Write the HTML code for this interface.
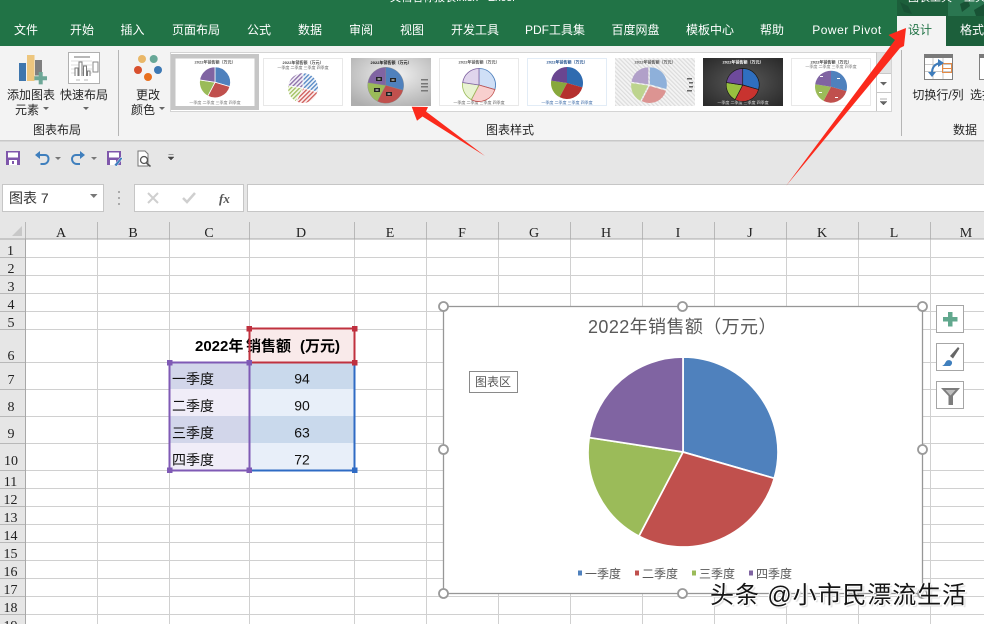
<!DOCTYPE html>
<html><head><meta charset="utf-8">
<style>
html,body{margin:0;padding:0;width:984px;height:624px;overflow:hidden;background:#fff}
svg{position:absolute;left:0;top:0;display:block}
text{font-family:"Liberation Sans","Noto Sans CJK SC",sans-serif}
.t{fill:#fff;font-size:12px;text-anchor:middle}
.r{fill:#262626;font-size:12px;text-anchor:middle}
.h{font-family:"Liberation Serif","Noto Sans CJK SC",serif;font-size:14px;fill:#222;text-anchor:middle}
.c{font-size:14px;fill:#111}
.b{font-size:15px;fill:#000;font-weight:bold}
.n{font-size:14px;fill:#111;text-anchor:middle}
.l{font-size:12px;fill:#595959}
.tt{font-size:4px;font-weight:bold;text-anchor:middle}
#wm{position:absolute;left:710px;top:578px;font:24px/36px "Liberation Sans","Noto Sans CJK SC",sans-serif;letter-spacing:.9px;color:#151515;white-space:pre;text-shadow:1px 1px 0 #fff,-1px 0 0 #fff,2px 2px 1px #ddd}
</style></head><body>
<svg width="984" height="624" viewBox="0 0 984 624" xmlns="http://www.w3.org/2000/svg">
<defs>
<path id="a" d="M0 0V-1A1 1 0 0 1 .961 .277Z"/>
<path id="b" d="M0 0L.961 .277A1 1 0 0 1 -.464 .886Z"/>
<path id="c" d="M0 0L-.464 .886A1 1 0 0 1 -.988 -.152Z"/>
<path id="d" d="M0 0L-.988 -.152A1 1 0 0 1 0 -1Z"/>
<pattern id="h1" width=".2" height=".2" patternUnits="userSpaceOnUse" patternTransform="rotate(45)"><rect width=".2" height=".2" fill="#eef3fa"/><rect width=".09" height=".2" fill="#5b8cc6"/></pattern>
<pattern id="h2" width=".2" height=".2" patternUnits="userSpaceOnUse" patternTransform="rotate(45)"><rect width=".2" height=".2" fill="#fbeeee"/><rect width=".09" height=".2" fill="#d0605c"/></pattern>
<pattern id="h3" width=".2" height=".2" patternUnits="userSpaceOnUse" patternTransform="rotate(45)"><rect width=".2" height=".2" fill="#f4f8ea"/><rect width=".09" height=".2" fill="#a5c264"/></pattern>
<pattern id="h4" width=".2" height=".2" patternUnits="userSpaceOnUse" patternTransform="rotate(45)"><rect width=".2" height=".2" fill="#f3eff7"/><rect width=".09" height=".2" fill="#8f74ab"/></pattern>
<pattern id="hb" width="3" height="3" patternUnits="userSpaceOnUse" patternTransform="rotate(-45)"><rect width="3" height="3" fill="#f4f4f4"/><rect width="1.2" height="3" fill="#dcdcdc"/></pattern>
<radialGradient id="g3" cx="55%" cy="35%" r="75%"><stop offset="0" stop-color="#f2f2f2"/><stop offset="1" stop-color="#aeaeae"/></radialGradient>
<radialGradient id="g7" cx="50%" cy="50%" r="65%"><stop offset="0" stop-color="#5a5a5a"/><stop offset="1" stop-color="#2c2c2c"/></radialGradient>
</defs>

<!-- title bar -->
<rect width="984" height="46" fill="#217346"/>
<rect x="897" width="87" height="16" fill="#1c5f3b"/>
<rect x="946" y="16" width="38" height="30" fill="#1c5f3b"/>
<rect x="948" y="0" width="36" height="16" fill="#2a7650"/>
<path d="M900 2l8 4 4 8-8-2zM960 4l8-4 2 6-8 6zM974 10l10-6v12h-8z" fill="#185235"/>
<text x="390" y="1" fill="#fff" font-size="11">文档名称报表.xlsx - Excel</text>
<text x="908" y="1" fill="#fff" font-size="11">图表工具</text>
<text x="964" y="1" fill="#fff" font-size="11">工具</text>

<!-- ribbon tabs -->
<g class="tabs">
<text class="t" x="26" y="34">文件</text>
<text class="t" x="82" y="34">开始</text>
<text class="t" x="132.500" y="34">插入</text>
<text class="t" x="196" y="34">页面布局</text>
<text class="t" x="259" y="34">公式</text>
<text class="t" x="310" y="34">数据</text>
<text class="t" x="361" y="34">审阅</text>
<text class="t" x="412" y="34">视图</text>
<text class="t" x="475" y="34">开发工具</text>
<text class="t" x="555" y="34">PDF工具集</text>
<text class="t" x="635.500" y="34">百度网盘</text>
<text class="t" x="710" y="34">模板中心</text>
<text class="t" x="772" y="34">帮助</text>
<text class="t" x="847" y="34" style="letter-spacing:.5px">Power Pivot</text>
</g>
<rect x="897" y="16" width="49" height="30" fill="#f3f3f3"/>
<text class="t" x="920" y="34" style="fill:#217346">设计</text>
<text class="t" x="972" y="34">格式</text>

<!-- ribbon -->
<rect y="46" width="984" height="94" fill="#f3f3f3"/>
<rect y="140" width="984" height="1.500" fill="#c8c8c8"/>
<rect y="141.500" width="984" height="80.500" fill="#e6e6e6"/>
<rect x="118" y="50" width="1" height="86" fill="#b5b5b5"/>
<rect x="901" y="50" width="1" height="86" fill="#b5b5b5"/>

<!-- add chart element icon -->
<rect x="19" y="63" width="7" height="18" fill="#3f76ad"/>
<rect x="27" y="55" width="7.500" height="26" fill="#edc67e"/>
<rect x="35" y="60" width="7" height="15.500" fill="#7f7f7f"/>
<path d="M38.700 72h4v4.200H47v4h-4.300v4.200h-4v-4.200h-4.300v-4h4.300z" fill="#6da797"/>
<!-- quick layout icon -->
<rect x="68.500" y="52.500" width="31" height="31" fill="#fff" stroke="#b0b0b0"/>
<rect x="74" y="56" width="16" height="2" fill="#b8b8b8"/>
<path d="M71 61h21M71 65h21M71 69h21M71 73h21" stroke="#dcdcdc"/>
<path d="M75 76V68h3v8M79 76V62h3v14M83.500 76V66h3v10M87.500 76V71h2.500v5" fill="#fff" stroke="#7a7a7a"/>
<rect x="93" y="62" width="5" height="10" fill="#fff" stroke="#8a8a8a"/>
<path d="M76 80h4M84 80h4" stroke="#b8b8b8"/>
<!-- colours icon -->
<circle cx="142" cy="59" r="4" fill="#e9b768"/>
<circle cx="153.700" cy="59" r="4" fill="#67a797"/>
<circle cx="138" cy="70" r="4" fill="#d8502e"/>
<circle cx="158" cy="70" r="4" fill="#3c78b4"/>
<circle cx="148" cy="77" r="4" fill="#e8701f"/>

<text class="r" x="31" y="99">添加图表</text>
<text class="r" x="27" y="114">元素</text>
<path d="M43 107h6l-3 3z" fill="#666"/>
<text class="r" x="84" y="99">快速布局</text>
<path d="M83 107h6l-3 3z" fill="#666"/>
<text class="r" x="148" y="99">更改</text>
<text class="r" x="143" y="114">颜色</text>
<path d="M159 107h6l-3 3z" fill="#666"/>
<text class="r" x="57" y="134">图表布局</text>
<text class="r" x="510" y="134">图表样式</text>
<text class="r" x="938" y="99">切换行/列</text>
<text x="970" y="99" font-size="12" fill="#262626">选择</text>
<text class="r" x="965" y="134">数据</text>

<!-- gallery -->
<rect x="170.500" y="52.500" width="721" height="59" fill="#fff" stroke="#d4d4d4"/>
<rect x="171" y="54" width="88" height="56" fill="#c6c6c6"/>
<rect x="876" y="53" width="15" height="20" fill="#e2e2e2"/>
<path d="M876.500 52v59M876 73.500h15M876 92.500h15" stroke="#c8c8c8"/>
<path d="M880 82h7l-3.500 3.500z" fill="#666"/>
<path d="M880 99h7M880 101.500h7l-3.500 3.500z" fill="#666" stroke="#666" stroke-width=".5"/>

<!-- thumb 1 -->
<rect x="175.500" y="58.500" width="79" height="47.500" fill="#fff"/>
<text class="tt" x="215" y="63.500" fill="#555">2022年销售额（万元）</text>
<text class="tt" x="215" y="104" fill="#777" style="font-weight:normal">一季度 二季度 三季度 四季度</text>
<g transform="translate(215,82.300) scale(15.500)" stroke="#fff" stroke-width=".05"><use href="#a" fill="#4f81bd"/><use href="#b" fill="#c0504d"/><use href="#c" fill="#9bbb59"/><use href="#d" fill="#8064a2"/></g>
<!-- thumb 2 -->
<rect x="263.500" y="58.500" width="79" height="47" fill="#fff" stroke="#e8e8e8"/>
<text class="tt" x="303" y="64" fill="#444">2022年销售额（万元）</text>
<text class="tt" x="303" y="69" fill="#666" style="font-weight:normal">一季度 二季度 三季度 四季度</text>
<g transform="translate(303,88) scale(15.300)" stroke="#fff" stroke-width=".05"><use href="#a" fill="url(#h1)"/><use href="#b" fill="url(#h2)"/><use href="#c" fill="url(#h3)"/><use href="#d" fill="url(#h4)"/></g>
<!-- thumb 3 -->
<rect x="351" y="58" width="80" height="48" fill="url(#g3)"/>
<text class="tt" x="391" y="64" fill="#111">2022年销售额（万元）</text>
<g transform="translate(385.700,85.300) scale(18)" stroke="#888" stroke-width=".02"><use href="#a" fill="#4f81bd"/><use href="#b" fill="#c0504d"/><use href="#c" fill="#9bbb59"/><use href="#d" fill="#8064a2"/></g>
<g fill="#222"><rect x="390" y="78" width="6" height="4"/><rect x="376" y="77" width="6" height="4"/><rect x="374" y="88" width="6" height="4"/><rect x="386" y="92" width="6" height="4"/></g>
<g fill="#fff"><rect x="391.500" y="79.500" width="3" height="1"/><rect x="377.500" y="78.500" width="3" height="1"/><rect x="375.500" y="89.500" width="3" height="1"/><rect x="387.500" y="93.500" width="3" height="1"/></g>
<g fill="#777"><rect x="421" y="79" width="7" height="1.500"/><rect x="421" y="83" width="7" height="1.500"/><rect x="421" y="86" width="7" height="1.500"/><rect x="421" y="90" width="7" height="1.500"/></g>
<!-- thumb 4 -->
<rect x="439.500" y="58.500" width="79" height="47" fill="#fff" stroke="#e8e8e8"/>
<text class="tt" x="479" y="63.500" fill="#555">2022年销售额（万元）</text>
<text class="tt" x="479" y="104" fill="#666" style="font-weight:normal">一季度 二季度 三季度 四季度</text>
<g transform="translate(479,85) scale(16.500)" stroke-width=".05"><use href="#a" fill="#cfdff6" stroke="#4f81bd"/><use href="#b" fill="#f8cfce" stroke="#c0504d"/><use href="#c" fill="#e9f3d2" stroke="#9bbb59"/><use href="#d" fill="#e0d5ec" stroke="#8064a2"/></g>
<!-- thumb 5 -->
<rect x="527.500" y="58.500" width="79" height="47" fill="#fff" stroke="#e2ecf6"/>
<text class="tt" x="567" y="63.500" fill="#1f4e8c">2022年销售额（万元）</text>
<text class="tt" x="567" y="104" fill="#3a6aa8" style="font-weight:normal">一季度 二季度 三季度 四季度</text>
<g transform="translate(567,83) scale(16)"><use href="#a" fill="#2f6bb0"/><use href="#b" fill="#b5302e"/><use href="#c" fill="#88a83c"/><use href="#d" fill="#6a4690"/></g>
<!-- thumb 6 -->
<rect x="615" y="58" width="80" height="48" fill="url(#hb)"/>
<text class="tt" x="655" y="63.500" fill="#555">2022年销售额（万元）</text>
<g transform="translate(649,85) scale(17)"><use href="#a" fill="#8eb0da" transform="translate(.05,-.04)"/><use href="#b" fill="#dc9492" transform="translate(.04,.06)"/><use href="#c" fill="#bdd48e" transform="translate(-.05,.04)"/><use href="#d" fill="#b1a0c9" transform="translate(-.04,-.04)"/></g>
<g fill="#666"><rect x="687" y="78" width="5" height="1.500"/><rect x="689" y="82" width="4" height="1.500"/><rect x="689" y="86" width="4" height="1.500"/><rect x="687" y="90" width="5" height="1.500"/></g>
<!-- thumb 7 -->
<rect x="703" y="58" width="80" height="48" fill="url(#g7)"/>
<text class="tt" x="743" y="63.500" fill="#fff">2022年销售额（万元）</text>
<text class="tt" x="743" y="104" fill="#ddd" style="font-weight:normal">一季度 二季度 三季度 四季度</text>
<g transform="translate(742.700,85) scale(16.500)" stroke="#1a1a1a" stroke-width=".04"><use href="#a" fill="#2f6fc0"/><use href="#b" fill="#c8332f"/><use href="#c" fill="#98c03f"/><use href="#d" fill="#6e4a9c"/></g>
<!-- thumb 8 -->
<rect x="791.500" y="58.500" width="79" height="47" fill="#fff" stroke="#e8e8e8"/>
<text class="tt" x="831" y="63.500" fill="#444">2022年销售额（万元）</text>
<text class="tt" x="831" y="68" fill="#777" style="font-weight:normal">一季度 二季度 三季度 四季度</text>
<g transform="translate(831,86.700) scale(16)"><use href="#a" fill="#4f81bd"/><use href="#b" fill="#c0504d"/><use href="#c" fill="#9bbb59"/><use href="#d" fill="#8064a2"/></g>
<g fill="#fff"><rect x="837" y="78" width="3" height="1"/><rect x="835" y="97" width="3" height="1"/><rect x="819" y="92" width="3" height="1"/><rect x="820" y="76" width="3" height="1"/></g>

<!-- switch row/col icon -->
<rect x="924.500" y="54.500" width="28" height="25" fill="#fff" stroke="#808080"/>
<rect x="924" y="54" width="29" height="4" fill="#7a7a7a"/>
<path d="M925 64.500h27M925 71.500h27M933 58v21M943 58v21" stroke="#c8c8c8"/>
<rect x="942.500" y="63.500" width="9" height="9" fill="none" stroke="#e58a45"/>
<path d="M942.500 68.500h9" stroke="#e58a45"/>
<path d="M932 73c0-6 3-9 8-10" fill="none" stroke="#3e7cbb" stroke-width="2"/>
<path d="M938 59l6 4-6 4zM928 72h8l-4 5z" fill="#3e7cbb"/>
<!-- next icon -->
<rect x="979.500" y="54.500" width="8" height="25" fill="#fff" stroke="#808080"/>
<rect x="979" y="54" width="6" height="4" fill="#7a7a7a"/>

<!-- QAT -->
<path d="M6 151h14v14H6z" fill="#7f57ab"/>
<rect x="8" y="152.500" width="10" height="5" fill="#fff"/>
<rect x="9" y="160" width="8" height="5" fill="#fff"/>
<rect x="12" y="161" width="2" height="3" fill="#7f57ab"/>
<path d="M38 155h7c3 0 3.500 2.500 3.500 4s-1 5-5 5h-3" fill="none" stroke="#3f7fbd" stroke-width="2"/>
<path d="M35 155l5-4v8z" fill="#3f7fbd"/>
<path d="M55 157h6l-3 3z" fill="#777"/>
<path d="M82 155h-6c-3 0-4 2.500-4 4s1 5 5 5h3" fill="none" stroke="#3f7fbd" stroke-width="2"/>
<path d="M85 155l-5-4v8z" fill="#3f7fbd"/>
<path d="M91 157h6l-3 3z" fill="#777"/>
<path d="M107 151h14v14h-14z" fill="#7f57ab"/>
<rect x="109" y="152.500" width="10" height="5" fill="#fff"/>
<rect x="110" y="160" width="6" height="5" fill="#fff"/>
<path d="M114 165l7-8 1.500 1.500-6 8z" fill="#3f7fbd" stroke="#fff" stroke-width=".5"/>
<path d="M138 151h7l3 3v12h-10z" fill="#fff" stroke="#777"/>
<circle cx="144" cy="160" r="3.500" fill="#fff" stroke="#555" stroke-width="1.300"/>
<path d="M146.500 163l4 3.500" stroke="#555" stroke-width="1.500"/>
<path d="M168.500 154.500h5M168 157h6l-3 3z" fill="#444" stroke="#444" stroke-width=".5"/>

<!-- formula bar -->
<rect x="2.500" y="184.500" width="101" height="27" fill="#fff" stroke="#c6c6c6"/>
<text x="9" y="203" font-size="14" fill="#333">图表 7</text>
<path d="M90 194h7.500l-3.700 4z" fill="#777"/>
<path d="M119 191v2M119 197v2M119 203v2" stroke="#aaa" stroke-width="2"/>
<rect x="134.500" y="184.500" width="109" height="27" fill="#fff" stroke="#c6c6c6"/>
<path d="M148 193l10 10M158 193l-10 10" stroke="#cfcfcf" stroke-width="2"/>
<path d="M183 198l4 4 8-9" fill="none" stroke="#cfcfcf" stroke-width="2.500"/>
<text x="219" y="203" style="font-family:'Liberation Serif',serif;font-size:13px;font-style:italic;font-weight:bold" fill="#555">fx</text>
<rect x="247.500" y="184.500" width="740" height="27" fill="#fff" stroke="#c6c6c6"/>

<!-- grid -->
<rect y="222" width="984" height="17" fill="#e6e6e6"/>
<rect y="239" width="25" height="385" fill="#e6e6e6"/>
<path d="M12 236l10-10v10z" fill="#c8c8c8"/>
<g stroke="#d0d0d0" fill="none">
<path d="M25.500 239H984M25 257.500h959M25 275.500h959M25 293.500h959M25 311.500h959M25 329.500h959M25 362.500h959M25 389.500h959M25 416.500h959M25 443.500h959M25 470.500h959M25 488.500h959M25 506.500h959M25 524.500h959M25 542.500h959M25 560.500h959M25 578.500h959M25 596.500h959M25 614.500h959"/>
<path d="M97.500 239V624M169.500 239V624M249.500 239V624M354.500 239V624M426.500 239V624M498.500 239V624M570.500 239V624M642.500 239V624M714.500 239V624M786.500 239V624M858.500 239V624M930.500 239V624"/>
</g>
<g stroke="#b8b8b8">
<path d="M25.500 222v17M97.500 222v17M169.500 222v17M249.500 222v17M354.500 222v17M426.500 222v17M498.500 222v17M570.500 222v17M642.500 222v17M714.500 222v17M786.500 222v17M858.500 222v17M930.500 222v17"/>
<path d="M0 257.500h25M0 275.500h25M0 293.500h25M0 311.500h25M0 329.500h25M0 362.500h25M0 389.500h25M0 416.500h25M0 443.500h25M0 470.500h25M0 488.500h25M0 506.500h25M0 524.500h25M0 542.500h25M0 560.500h25M0 578.500h25M0 596.500h25M0 614.500h25"/>
</g>
<path d="M0 239h984" stroke="#a8a8a8"/>
<path d="M25.500 239v385" stroke="#a8a8a8"/>

<!-- column letters -->
<text class="h" x="61" y="237">A</text><text class="h" x="133" y="237">B</text><text class="h" x="209" y="237">C</text><text class="h" x="301" y="237">D</text><text class="h" x="390" y="237">E</text><text class="h" x="462" y="237">F</text><text class="h" x="534" y="237">G</text><text class="h" x="606" y="237">H</text><text class="h" x="678" y="237">I</text><text class="h" x="750" y="237">J</text><text class="h" x="822" y="237">K</text><text class="h" x="894" y="237">L</text><text class="h" x="966" y="237">M</text>
<!-- row numbers -->
<text class="h" x="10.500" y="255">1</text><text class="h" x="11" y="273">2</text><text class="h" x="11" y="291">3</text><text class="h" x="11" y="309">4</text><text class="h" x="11" y="327">5</text><text class="h" x="11" y="360">6</text><text class="h" x="11" y="384">7</text><text class="h" x="11" y="411">8</text><text class="h" x="11" y="438">9</text><text class="h" x="11" y="465">10</text><text class="h" x="10.500" y="486">11</text><text class="h" x="10.500" y="504">12</text><text class="h" x="10.500" y="522">13</text><text class="h" x="10.500" y="540">14</text><text class="h" x="10.500" y="558">15</text><text class="h" x="10.500" y="576">16</text><text class="h" x="10.500" y="594">17</text><text class="h" x="10.500" y="612">18</text><text class="h" x="10.500" y="630">19</text>

<!-- table -->
<rect x="249" y="329" width="105" height="33" fill="#f9eaea"/>
<rect x="170" y="363" width="79" height="26" fill="#d2d6ea"/>
<rect x="170" y="389" width="79" height="27" fill="#f0edf8"/>
<rect x="170" y="416" width="79" height="27" fill="#d2d6ea"/>
<rect x="170" y="443" width="79" height="27" fill="#f0edf8"/>
<rect x="250" y="363" width="104" height="26" fill="#c9d9ec"/>
<rect x="250" y="389" width="104" height="27" fill="#e8eff9"/>
<rect x="250" y="416" width="104" height="27" fill="#c9d9ec"/>
<rect x="250" y="443" width="104" height="27" fill="#e8eff9"/>
<text class="b" x="195" y="351">2022年</text>
<text class="b" x="246" y="351">销售额</text>
<text class="b" x="300" y="351">(万元)</text>
<text class="c" x="172" y="384">一季度</text>
<text class="c" x="172" y="411">二季度</text>
<text class="c" x="172" y="438">三季度</text>
<text class="c" x="172" y="465">四季度</text>
<text class="n" x="302" y="383.500">94</text>
<text class="n" x="302" y="410.500">90</text>
<text class="n" x="302" y="437.500">63</text>
<text class="n" x="302" y="464.500">72</text>
<!-- range borders -->
<path d="M250 470.500H354.500V363" fill="none" stroke="#2f6bc4" stroke-width="2"/>
<path d="M249.500 362.500V328.500H354.500V362.500H249.500" fill="none" stroke="#c0323f" stroke-width="2"/>
<path d="M249.500 362.500H169.500V470.500H249.500V362.500" fill="none" stroke="#7f5ab5" stroke-width="2"/>
<g fill="#bf303f"><rect x="246.500" y="326" width="5.500" height="5.500"/><rect x="352" y="326" width="5.500" height="5.500"/><rect x="352" y="360" width="5.500" height="5.500"/></g>
<g fill="#7f5ab5"><rect x="167" y="360" width="5.500" height="5.500"/><rect x="246.500" y="360" width="5.500" height="5.500"/><rect x="167" y="467.500" width="5.500" height="5.500"/><rect x="246.500" y="467.500" width="5.500" height="5.500"/></g>
<rect x="352" y="467.500" width="5.500" height="5.500" fill="#2f6bc4"/>

<!-- chart -->
<rect x="443.500" y="306.500" width="479" height="287" fill="#fff" stroke="#979797" stroke-width="1.300"/>
<text x="588" y="333" font-size="18" style="letter-spacing:.4px" fill="#595959">2022年销售额（万元）</text>
<rect x="469.500" y="371.500" width="48" height="21" fill="#fff" stroke="#8a8a8a"/>
<text x="475" y="386" font-size="12" fill="#595959">图表区</text>
<g transform="translate(683,452) scale(95)" stroke="#fff" stroke-width=".018"><use href="#a" fill="#4f81bd"/><use href="#b" fill="#c0504d"/><use href="#c" fill="#9bbb59"/><use href="#d" fill="#8064a2"/></g>
<rect x="578" y="570.500" width="4" height="5" fill="#4f81bd"/><text class="l" x="585" y="578">一季度</text>
<rect x="635" y="570.500" width="4" height="5" fill="#c0504d"/><text class="l" x="642" y="578">二季度</text>
<rect x="692" y="570.500" width="4" height="5" fill="#9bbb59"/><text class="l" x="699" y="578">三季度</text>
<rect x="749" y="570.500" width="4" height="5" fill="#8064a2"/><text class="l" x="756" y="578">四季度</text>
<g fill="#fff" stroke="#9a9a9a" stroke-width="1.800">
<circle cx="443.500" cy="306.500" r="4.500"/><circle cx="682.500" cy="306.500" r="4.500"/><circle cx="922.500" cy="306.500" r="4.500"/>
<circle cx="443.500" cy="449.500" r="4.500"/><circle cx="922.500" cy="449.500" r="4.500"/>
<circle cx="443.500" cy="593.500" r="4.500"/><circle cx="682.500" cy="593.500" r="4.500"/><circle cx="922.500" cy="593.500" r="4.500"/>
</g>

<!-- side buttons -->
<g fill="#fff" stroke="#a6a6a6"><rect x="936.500" y="305.500" width="27" height="27"/><rect x="936.500" y="343.500" width="27" height="27"/><rect x="936.500" y="381.500" width="27" height="27"/></g>
<path d="M948 312h4.500v5h5v4.500h-5v5H948v-5h-5V317h5z" fill="#62a88e"/>
<path d="M950 356l8-9 1.500 1.500-6.500 10z" fill="#666"/>
<path d="M942 366c3-1 3-4 5-5.500 2-1 5 0 5 2 .3 1.500-1 3-2 3.500z" fill="#3f7fbd"/>
<path d="M941 388h19l-7 8v9h-4.500v-9z" fill="#7d7d7d"/>
<path d="M945.500 390h10l-5 5.500z" fill="#fff" opacity=".5"/>

<!-- red arrows -->
<path d="M411.700 106.700L428 107 426 111.500 485 156 422.500 116.500 417 120.700Z" fill="#fb2a1c"/>
<path d="M906 28L888.500 35 895 40 786 186 900 48 904 46Z" fill="#fb2a1c"/>
</svg>
<div id="wm">头条 @小市民漂流生活</div>
</body></html>
